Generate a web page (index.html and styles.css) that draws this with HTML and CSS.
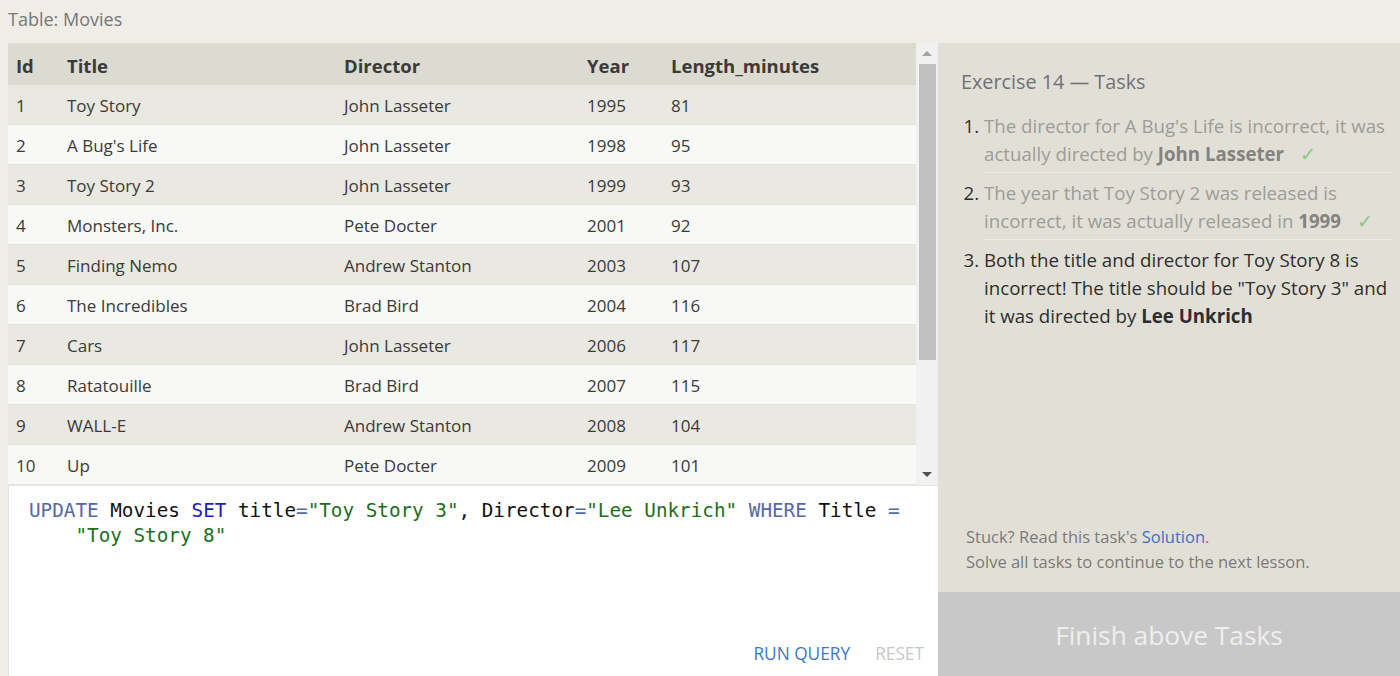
FILE: index.html
```html
<!DOCTYPE html>
<html>
<head>
<meta charset="utf-8">
<title>SQL Exercise 14</title>
<link rel="stylesheet" href="styles.css">
</head>
<body>
<div class="page">
  <div class="top-label">Table: Movies</div>
  <div class="main">
    <div class="left">
      <div class="grid-wrap">
        <div class="table-scroll">
          <table class="movies">
            <colgroup>
              <col class="c-id"><col class="c-title"><col class="c-dir"><col class="c-year"><col>
            </colgroup>
            <thead>
              <tr><th>Id</th><th>Title</th><th>Director</th><th>Year</th><th>Length_minutes</th></tr>
            </thead>
            <tbody>
              <tr><td>1</td><td>Toy Story</td><td>John Lasseter</td><td>1995</td><td>81</td></tr>
              <tr><td>2</td><td>A Bug's Life</td><td>John Lasseter</td><td>1998</td><td>95</td></tr>
              <tr><td>3</td><td>Toy Story 2</td><td>John Lasseter</td><td>1999</td><td>93</td></tr>
              <tr><td>4</td><td>Monsters, Inc.</td><td>Pete Docter</td><td>2001</td><td>92</td></tr>
              <tr><td>5</td><td>Finding Nemo</td><td>Andrew Stanton</td><td>2003</td><td>107</td></tr>
              <tr><td>6</td><td>The Incredibles</td><td>Brad Bird</td><td>2004</td><td>116</td></tr>
              <tr><td>7</td><td>Cars</td><td>John Lasseter</td><td>2006</td><td>117</td></tr>
              <tr><td>8</td><td>Ratatouille</td><td>Brad Bird</td><td>2007</td><td>115</td></tr>
              <tr><td>9</td><td>WALL-E</td><td>Andrew Stanton</td><td>2008</td><td>104</td></tr>
              <tr><td>10</td><td>Up</td><td>Pete Docter</td><td>2009</td><td>101</td></tr>
              <tr><td>11</td><td>Toy Story 8</td><td>El Directore</td><td>2010</td><td>103</td></tr>
              <tr><td>12</td><td>Cars 2</td><td>John Lasseter</td><td>2011</td><td>120</td></tr>
              <tr><td>13</td><td>Brave</td><td>Brenda Chapman</td><td>2012</td><td>102</td></tr>
              <tr><td>14</td><td>Monsters University</td><td>Dan Scanlon</td><td>2013</td><td>110</td></tr>
            </tbody>
          </table>
        </div>
        <div class="scrollbar">
          <div class="sb-btn"><span class="tri-up"></span></div>
          <div class="sb-track"><div class="sb-thumb"></div></div>
          <div class="sb-btn"><span class="tri-down"></span></div>
        </div>
      </div>
      <div class="editor">
        <div class="code">
          <div class="code-line"><span class="kw">UPDATE</span> Movies <span class="kw2">SET</span> title<span class="op">=</span><span class="str">"Toy Story 3"</span>, Director<span class="op">=</span><span class="str">"Lee Unkrich"</span> <span class="kw">WHERE</span> Title <span class="op">=</span></div>
          <div class="code-line cont"><span class="str">"Toy Story 8"</span></div>
        </div>
        <div class="actions">
          <span class="run">RUN QUERY</span>
          <span class="reset">RESET</span>
        </div>
      </div>
    </div>
    <div class="right">
      <div class="tasks">
        <h2 class="tasks-title">Exercise 14 — Tasks</h2>
        <ol class="task-list">
          <li class="done"><span class="task-text">The director for A Bug's Life is incorrect, it was actually directed by <b>John Lasseter</b></span><span class="check">✓</span></li>
          <li class="done"><span class="task-text">The year that Toy Story 2 was released is incorrect, it was actually released in <b>1999</b></span><span class="check">✓</span></li>
          <li class="todo"><span class="task-text">Both the title and director for Toy Story 8 is incorrect! The title should be "Toy Story 3" and it was directed by <b>Lee Unkrich</b></span></li>
        </ol>
      </div>
      <div class="help">
        <div>Stuck? Read this task's <span class="link">Solution</span>.</div>
        <div>Solve all tasks to continue to the next lesson.</div>
      </div>
      <div class="finish">Finish above Tasks</div>
    </div>
  </div>
</div>
</body>
</html>
```

FILE: styles.css
```css
html, body {
  margin: 0;
  padding: 0;
}

body {
  background: #efede6;
  font-family: "Open Sans", "Noto Sans", sans-serif;
  color: #333;
  overflow: hidden;
}

.page {
  width: 1400px;
  height: 676px;
  display: flex;
  flex-direction: column;
}

.top-label {
  height: 43px;
  line-height: 38px;
  padding-left: 8px;
  font-size: 18px;
  color: #777;
  box-sizing: border-box;
}

.main {
  flex: 1;
  display: flex;
  min-height: 0;
}

.left {
  width: 930px;
  margin-left: 8px;
  display: flex;
  flex-direction: column;
}

.grid-wrap {
  height: 443px;
  display: flex;
  border-bottom: 1px solid #e6e5df;
  box-sizing: border-box;
}

.table-scroll {
  flex: 1;
  overflow: hidden;
}

.movies {
  width: 100%;
  border-collapse: collapse;
  table-layout: fixed;
  font-size: 17px;
}

.c-id { width: 51px; }
.c-title { width: 277px; }
.c-dir { width: 243px; }
.c-year { width: 84px; }

.movies th {
  height: 42px;
  box-sizing: border-box;
  background: #dcdbd1;
  text-align: left;
  font-weight: 700;
  font-size: 18.5px;
  color: #3a3a3a;
  padding: 3px 8px 0 8px;
}

.movies td {
  height: 38px;
  padding: 1px 8px 0 8px;
  border-bottom: 1px solid #e2e1da;
  color: #3a3a3a;
  white-space: nowrap;
}

.movies tbody tr:nth-child(odd) td {
  background: #e9e8e1;
}

.movies tbody tr:nth-child(even) td {
  background: #f8f8f6;
}

.scrollbar {
  width: 22px;
  background: #f1f1f1;
  display: flex;
  flex-direction: column;
}

.sb-btn {
  height: 21px;
  display: flex;
  align-items: center;
  justify-content: center;
}

.tri-up {
  width: 0;
  height: 0;
  border-left: 5px solid transparent;
  border-right: 5px solid transparent;
  border-bottom: 5px solid #a3a3a3;
}

.tri-down {
  width: 0;
  height: 0;
  border-left: 5px solid transparent;
  border-right: 5px solid transparent;
  border-top: 5px solid #505050;
}

.sb-track {
  flex: 1;
}

.sb-thumb {
  height: 296px;
  margin: 0 2px 0 3px;
  background: #c1c1c1;
}

.editor {
  flex: 1;
  background: #fff;
  border-left: 1px solid #e4e2da;
  display: flex;
  flex-direction: column;
}

.code {
  flex: 1;
  padding: 12px 0 0 20px;
  font-family: "DejaVu Sans Mono", "Liberation Mono", monospace;
  font-size: 19.3px;
  line-height: 25px;
  color: #111;
}

.code-line {
  white-space: pre;
}

.code-line.cont {
  padding-left: 4ch;
}

.kw { color: #5568a6; }
.kw2 { color: #1c1cb8; }
.op { color: #5568a6; }
.str { color: #1e6e1e; }

.actions {
  display: flex;
  justify-content: flex-end;
  gap: 25px;
  padding: 0 14px 11px 0;
  font-size: 17.3px;
  line-height: 22px;
}

.run { color: #3b78c6; }
.reset { color: #c8c8c8; }

.right {
  width: 462px;
  background: #e2e0d6;
  display: flex;
  flex-direction: column;
}

.tasks {
  padding: 26px 8px 0 23px;
}

.tasks-title {
  margin: 0 0 17px 0;
  font-size: 19.8px;
  line-height: 26px;
  font-weight: 400;
  color: #6f7178;
}

.task-list {
  margin: 0;
  padding-left: 23px;
  font-size: 18.7px;
  line-height: 28px;
  color: #2e2e2e;
}

.task-list li {
  padding-bottom: 4px;
  margin-bottom: 6px;
}

.task-list li.done {
  border-bottom: 1px solid #ecebe5;
}

.done .task-text {
  color: #9c9c98;
}

.done .task-text b {
  color: #838380;
}

.todo .task-text {
  color: #2e2e2e;
}

.check {
  color: #86c686;
  margin-left: 16px;
}

.help {
  margin-top: auto;
  padding: 0 8px 18px 28px;
  font-size: 16.5px;
  line-height: 25px;
  color: #7a7a78;
}

.link {
  color: #3f6fc6;
}

.finish {
  height: 84px;
  background: #c8c8c8;
  color: #efefef;
  font-size: 26.3px;
  padding-top: 2px;
  box-sizing: border-box;
  display: flex;
  align-items: center;
  justify-content: center;
}
```
